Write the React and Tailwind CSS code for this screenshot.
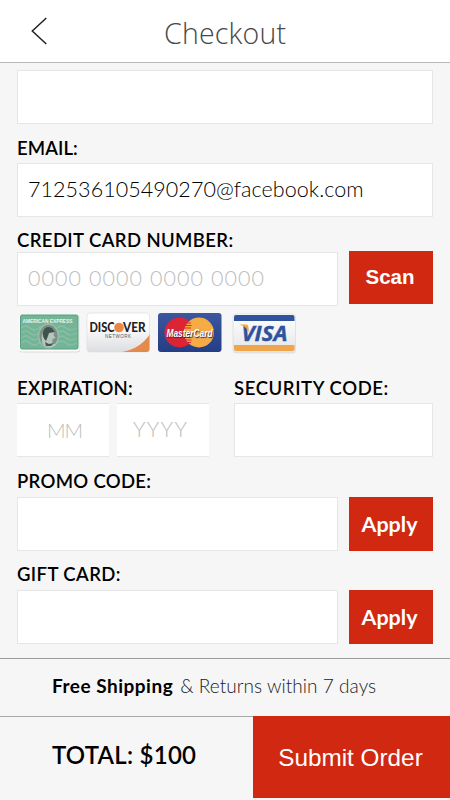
import React from "react";

function Label({ children, className = "" }) {
  return (
    <div className={`h-5 whitespace-nowrap font-['Lato'] text-[18.5px] font-semibold leading-5 text-black ${className}`}>
      {children}
    </div>
  );
}

function Field({ children, className = "h-[54px]" }) {
  return (
    <div className={`flex items-center whitespace-nowrap border border-[#e6e6e6] bg-white ${className}`}>
      {children}
    </div>
  );
}

function RedButton({ children, className = "" }) {
  return (
    <button className={`flex w-[84px] shrink-0 items-center justify-center bg-[#d12812] text-white ${className}`}>
      {children}
    </button>
  );
}

function Amex() {
  return (
    <svg width="64" height="40" viewBox="0 0 64 40" overflow="visible">
      <rect x="1" y="1.5" width="61" height="38" rx="3" fill="#d9dddb" />
      <rect x="1" y="1" width="60.5" height="37.5" rx="3" fill="#fff" />
      <rect x="2.5" y="2" width="57.5" height="34" rx="1.5" fill="#74b497" />
      <g fill="none" stroke="#88c0a7" strokeWidth="1.2">
        <path d="M3 15q5-4 9 0t9 0 9 0 9 0 9 0 11 0" />
        <path d="M3 20q5-4 9 0t9 0 9 0 9 0 9 0 11 0" />
        <path d="M3 25q5-4 9 0t9 0 9 0 9 0 9 0 11 0" />
        <path d="M3 30q5-4 9 0t9 0 9 0 9 0 9 0 11 0" />
      </g>
      <rect x="2.500" y="2" width="57.500" height="34" rx="1.500" fill="none" stroke="#579d7d" />
      <text x="4.500" y="9.500" textLength="50" lengthAdjust="spacingAndGlyphs" fontFamily="Liberation Sans" fontWeight="700" fontSize="6.200" fill="#e7f5ed">AMERICAN EXPRESS</text>
      <ellipse cx="30.500" cy="23" rx="10.500" ry="12.500" fill="#a0bdaf" />
      <ellipse cx="30.500" cy="23" rx="9.200" ry="11.300" fill="#7b9187" />
      <path d="M24.500 31q-2-8 1-12 3-6 9-3l2 3-1 3 2 3-3 1v4l4 2-5 2q-6 1-9-3z" fill="#b4c6bd" />
      <path d="M25 19q2-7 9-4l3 4-6 1-1 3-2 5q-4-4-3-9z" fill="#40534b" />
      <path d="M27 29l4 2 5-1-3 3-5 0z" fill="#435850" />
    </svg>
  );
}

function Discover() {
  return (
    <svg width="66" height="42" viewBox="0 0 66 42" overflow="visible">
      <defs>
        <linearGradient id="discBg" x1="0" y1="0" x2="0" y2="1">
          <stop offset="0.3" stopColor="#fff" />
          <stop offset="1" stopColor="#dcdddf" />
        </linearGradient>
        <clipPath id="discClip"><rect x="1" y="1" width="62.5" height="39" rx="3" /></clipPath>
      </defs>
      <rect x="1" y="1" width="62.5" height="39" rx="3" fill="url(#discBg)" stroke="#dedede" strokeWidth=".7" />
      <path clipPath="url(#discClip)" d="M36 40Q54 37 64 22V41H36Z" fill="#e38a4c" />
      <text x="3.5" y="20" textLength="25" lengthAdjust="spacingAndGlyphs" fontFamily="Lato" fontWeight="900" fontSize="13.5" fill="#25211f">DISC</text>
      <circle cx="33" cy="15.5" r="4.8" fill="#ee8745" />
      <text x="37" y="20" textLength="22.5" lengthAdjust="spacingAndGlyphs" fontFamily="Lato" fontWeight="900" fontSize="13.5" fill="#25211f">VER</text>
      <text x="19" y="26.3" textLength="26" fontFamily="Liberation Sans" fontSize="4.5" fill="#555">NETWORK</text>
    </svg>
  );
}

function MasterCard() {
  return (
    <svg width="66" height="42" viewBox="0 0 66 42" overflow="visible">
      <defs>
        <linearGradient id="mcBg" x1="0" y1="0" x2="0" y2="1">
          <stop offset="0" stopColor="#3c57a0" />
          <stop offset="1" stopColor="#233e84" />
        </linearGradient>
      </defs>
      <rect x="1" y="1" width="63.5" height="39" rx="3" fill="url(#mcBg)" />
      <circle cx="22.5" cy="20.5" r="15" fill="#dc2434" />
      <circle cx="42" cy="20.5" r="15" fill="#f5ac45" />
      <path d="M28.5 11h5.5M27.5 13.5h7M27 16h7M27 25.5h7M27.5 28h7M28.5 30.5h5.5" stroke="#dc2434" strokeWidth="1.2" />
      <text className="[text-shadow:1px_1px_1px_#3b1f38]" x="9.5" y="24.5" textLength="46" lengthAdjust="spacingAndGlyphs" fontFamily="Liberation Sans" fontWeight="700" fontStyle="italic" fontSize="10.5" fill="#fff">MasterCard</text>
    </svg>
  );
}

function Visa() {
  return (
    <svg width="65" height="41" viewBox="0 0 65 41" overflow="visible">
      <defs>
        <linearGradient id="visaBg" x1="0" y1="0" x2="0" y2="1">
          <stop offset="0" stopColor="#fff" />
          <stop offset="1" stopColor="#e4e5e7" />
        </linearGradient>
      </defs>
      <rect x="1" y="1" width="62.5" height="39" rx="3" fill="url(#visaBg)" stroke="#dadada" strokeWidth=".7" />
      <path d="M2 8V4q0-2 2-2h56.5q2 0 2 2V8z" fill="#2f539e" />
      <path d="M2 32H62.5V36q0 2-2 2H4q-2 0-2-2z" fill="#efa54b" />
      <text x="9.5" y="27.5" textLength="46" lengthAdjust="spacingAndGlyphs" fontFamily="Open Sans" fontWeight="700" fontStyle="italic" fontSize="21.5" fill="#2d529e" stroke="#2d529e" strokeWidth=".4">VISA</text>
      <path d="M7.5 11.5h6.5q2 0 2.3 2l.9 6q-3-6-9.7-8z" fill="#efa54b" />
    </svg>
  );
}

export default function App() {
  return (
    <div className="flex h-[800px] w-[450px] flex-col overflow-hidden bg-[#f6f6f6] font-['Lato',sans-serif]">
      <header className="flex h-[63px] shrink-0 items-center border-b border-[#b9b9b9] bg-white pl-[31px]">
        <svg width="17" height="28" viewBox="0 0 17 28" fill="none" stroke="#222" strokeWidth="1.5">
          <path d="M15.3 1L1.3 14l14 13" />
        </svg>
        <h1 className="ml-[116px] whitespace-nowrap pt-[3px] font-['Open_Sans'] text-[28.5px] font-light leading-8 tracking-[0.2px] text-[#484848]">Checkout</h1>
      </header>

      <main className="flex h-[595px] shrink-0 flex-col px-[17px] pt-[7px]">
        <Field />
        <Label className="mt-[14px] tracking-[0.1px]">EMAIL:</Label>
        <Field className="mt-[5px] h-[54px] pb-px pl-[10px]">
          <span className="text-[21.5px] font-light tracking-[0.06px] text-black">712536105490270@facebook.com</span>
        </Field>
        <Label className="mt-[13px] tracking-[0.4px]">CREDIT CARD NUMBER:</Label>
        <div className="mt-px flex items-start justify-between">
          <Field className="mt-px h-[54px] w-[321px] pb-[2px] pl-[10px]">
            <span className="text-[21.5px] font-light tracking-[1.05px] text-[#bdbdbd]">0000 0000 0000 0000</span>
          </Field>
          <RedButton className="h-[53px] pr-[2px] font-['Liberation_Sans'] text-[20.5px] font-bold">Scan</RedButton>
        </div>
        <div className="mt-[6px] flex h-[42px] items-start pl-px">
          <div className="pt-px"><Amex /></div>
          <div className="ml-[4px]"><Discover /></div>
          <div className="ml-[5px]"><MasterCard /></div>
          <div className="ml-[9px] pt-px"><Visa /></div>
        </div>
        <div className="mt-[24px] flex">
          <div className="w-[217px]">
            <Label className="tracking-[0.3px]">EXPIRATION:</Label>
            <div className="mt-[5px] flex gap-2">
              <Field className="h-[54px] w-[92px] border-x-0 pl-[30px]">
                <span className="text-[20.5px] font-light tracking-[-1.2px] text-[#bdbdbd]">MM</span>
              </Field>
              <Field className="h-[54px] w-[92px] border-x-0 pb-[3px] pl-[16px]">
                <span className="text-[21px] font-light tracking-[1.3px] text-[#bdbdbd]">YYYY</span>
              </Field>
            </div>
          </div>
          <div className="flex-1">
            <Label className="tracking-[0.6px]">SECURITY CODE:</Label>
            <Field className="mt-[5px] h-[54px]" />
          </div>
        </div>
        <Label className="mt-[14px] tracking-[0.3px]">PROMO CODE:</Label>
        <div className="mt-[6px] flex justify-between">
          <Field className="h-[54px] w-[321px]" />
          <RedButton className="h-[54px] pr-[3px] text-[21.5px] font-bold">Apply</RedButton>
        </div>
        <Label className="mt-[13px] tracking-[0.4px]">GIFT CARD:</Label>
        <div className="mt-[6px] flex justify-between">
          <Field className="h-[54px] w-[321px]" />
          <RedButton className="h-[54px] pr-[3px] text-[21.5px] font-bold">Apply</RedButton>
        </div>
      </main>

      <div className="flex h-[58px] shrink-0 items-center whitespace-nowrap border-t border-[#9c9c9c] pb-[3px] pl-[52px] text-[19px] text-[#222]">
        <b className="font-bold tracking-[0.5px] text-black">Free Shipping</b>
        <span className="ml-[7px] font-light tracking-[0.05px]">&amp; Returns within 7 days</span>
      </div>
      <footer className="flex h-[82px] shrink-0">
        <div className="flex w-[253px] items-center whitespace-nowrap border-t border-[#a8a8a8] pb-[6px] pl-[52px] text-[24px] font-semibold tracking-[0.25px] text-black">TOTAL: $100</div>
        <button className="flex flex-1 items-center justify-center whitespace-nowrap bg-[#d12812] pr-[2px] pt-[2px] font-['Liberation_Sans'] text-[24.3px] text-white">Submit Order</button>
      </footer>
    </div>
  );
}
